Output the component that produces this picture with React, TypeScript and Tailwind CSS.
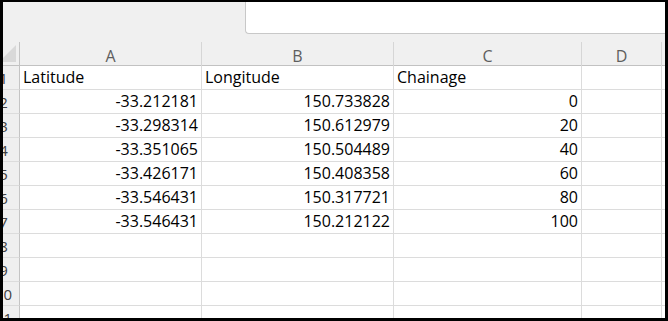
const cols = ["A", "B", "C", "D"];

const rows: [string, string, string][] = [
  ["-33.212181", "150.733828", "0"],
  ["-33.298314", "150.612979", "20"],
  ["-33.351065", "150.504489", "40"],
  ["-33.426171", "150.408358", "60"],
  ["-33.546431", "150.317721", "80"],
  ["-33.546431", "150.212122", "100"],
];

const grid = "grid grid-cols-[17px_182px_192px_188px_80px_1fr]";

function RowHead({ n }: { n: number }) {
  return (
    <div className="relative overflow-hidden border-r border-b border-r-[#c4c4c4] border-b-[#dcdcdc] bg-[#efefef]">
      <div className="-ml-[15px] flex h-full w-[31px] items-center justify-center pt-[1px] text-[15px] text-[#404040]">
        {n}
      </div>
    </div>
  );
}

function Cell({ children, right }: { children?: React.ReactNode; right?: boolean }) {
  return (
    <div
      className={`flex items-end border-r border-b border-[#dcdcdc] pb-[2px] text-[16px] leading-[20px] text-black ${
        right ? "justify-end pr-[3px]" : "pl-[3px]"
      }`}
    >
      {children}
    </div>
  );
}

export default function App() {
  const body: [string, string, string][] = [["Latitude", "Longitude", "Chainage"], ...rows];
  return (
    <div
      className="flex h-[321px] w-[668px] flex-col overflow-hidden border-x-[3px] border-t-2 border-b-[3px] border-black bg-white"
      style={{ fontFamily: "'Open Sans', 'Liberation Sans', sans-serif" }}
    >
      {/* ribbon strip with the white name box */}
      <div className="flex h-[40px] shrink-0 bg-[#f0f0f0]">
        <div className="w-[242px]" />
        <div className="h-[32px] flex-1 rounded-bl-[4px] border-b border-l border-[#c8c8c8] bg-white" />
      </div>

      {/* column letters */}
      <div className={`${grid} h-[24px] shrink-0 border-b border-[#c2c2c2] bg-[#f0f0f0]`}>
        <div className="relative border-r border-[#c4c4c4]">
          <svg className="absolute left-[-4px] top-[3px]" width="17" height="17" viewBox="0 0 17 17">
            <polygon points="17,0 17,17 0,17" fill="#d9d9d9" />
          </svg>
        </div>
        {cols.map((c) => (
          <div
            key={c}
            className="flex items-center justify-center border-r border-[#d6d6d6] pt-[2px] text-[16px] text-[#5e5e5e]"
          >
            {c}
          </div>
        ))}
        <div />
      </div>

      {/* data rows */}
      <div className="flex-1 overflow-hidden">
        {Array.from({ length: 11 }).map((_, i) => {
          const r = body[i];
          return (
            <div key={i} className={`${grid} h-[24px]`}>
              <RowHead n={i + 1} />
              <Cell right={i > 0}>{r ? r[0] : null}</Cell>
              <Cell right={i > 0}>{r ? r[1] : null}</Cell>
              <Cell right={i > 0}>{r ? r[2] : null}</Cell>
              <Cell />
              <div className="border-b border-[#dcdcdc]" />
            </div>
          );
        })}
      </div>
    </div>
  );
}
